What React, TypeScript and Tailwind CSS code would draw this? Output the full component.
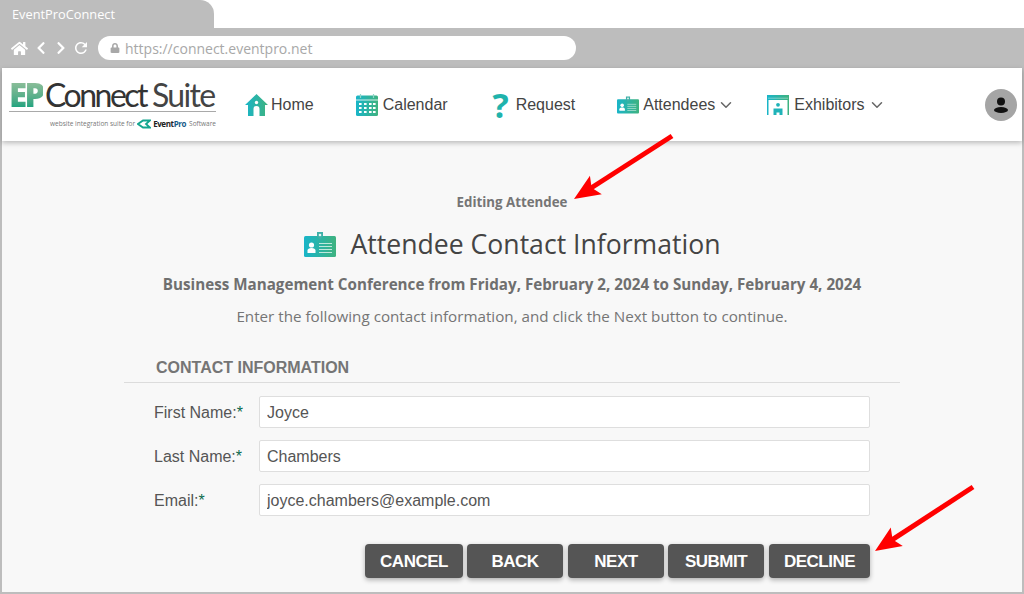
import React from "react";
import { FaHome, FaChevronLeft, FaChevronRight, FaLock } from "react-icons/fa";
import { MdRefresh } from "react-icons/md";
import { LuChevronDown } from "react-icons/lu";

const Grad = ({ id }: { id: string }) => (
  <defs>
    <linearGradient id={id} x1="0" y1="0" x2="1" y2="0">
      <stop offset="0" stopColor="#19b5c9" />
      <stop offset="1" stopColor="#3fb27f" />
    </linearGradient>
  </defs>
);

const HomeIcon = () => (
  <svg width="23" height="22" viewBox="0 0 23 22">
    <Grad id="g-home" />
    <path fill="url(#g-home)" fillRule="evenodd" d="M11.5 0 23 11h-3v11h-5.5v-7a3 3 0 0 0-6 0v7H3V11H0Z" />
    <circle cx="11.5" cy="8.5" r="1.7" fill="#fff" />
  </svg>
);

const CalendarIcon = () => (
  <svg width="22" height="22" viewBox="0 0 22 22">
    <Grad id="g-cal" />
    <rect x="0" y="1.5" width="22" height="20.5" rx="1.5" fill="url(#g-cal)" />
    <path d="M4.500 0v4M17.500 0v4" stroke="#8fd6c8" strokeWidth="1.2" />
    <path d="M0 6h22" stroke="#fff" strokeWidth="0.8" />
    {[9, 13, 17].map((y) =>
      [3, 8, 13, 17].map((x) => <rect key={`${x}-${y}`} x={x} y={y} width="2.600" height="2" fill="#fff" />)
    )}
  </svg>
);

const BadgeIcon = ({ id, w, h }: { id: string; w: number; h: number }) => (
  <svg width={w} height={h} viewBox="0 0 32 25">
    <Grad id={id} />
    <rect x="0" y="4" width="32" height="21" rx="1.500" fill={`url(#${id})`} />
    <path d="M13 0h6v4l-3 4-3-4Z" fill="#3fb0a8" />
    <circle cx="16" cy="3" r="1.300" fill="#e8f6f4" />
    <circle cx="7.500" cy="13" r="2.600" fill="#fff" />
    <path d="M3.500 21v-2.500c0-1.600 1.500-2.500 4-2.500s4 .9 4 2.500V21Z" fill="#fff" />
    <path d="M15 11.500h13M15 14.500h13M15 17.500h13M15 20.500h13" stroke="#bfe8dc" strokeWidth="1" />
  </svg>
);

const ExhibitorIcon = () => (
  <svg width="22" height="20" viewBox="0 0 22 20">
    <Grad id="g-exh" />
    <path d="M0 0h22v20h-1.500V5h-19v15H0Z" fill="url(#g-exh)" />
    <path d="M1.500 3.200h19" stroke="#fff" strokeWidth="0.8" strokeDasharray="1 1" />
    <circle cx="11" cy="9.800" r="1.900" fill="#1fb3b8" />
    <path d="M6.500 20v-6.500h9V20Z" fill="#1fb3b8" />
    <path d="M9.500 20v-2.500h3V20Z" fill="#fff" />
  </svg>
);

const navItems = [
  { label: "Home", icon: <HomeIcon />, gap: "gap-[3px]", margin: "ml-0" },
  { label: "Calendar", icon: <CalendarIcon />, gap: "gap-[5px]", margin: "ml-[42px]" },
  {
    label: "Request",
    icon: <span className="w-[20px] text-center text-[34px] leading-none font-bold text-[#1fb3ac] font-['Open_Sans',sans-serif]">?</span>,
    gap: "gap-[5px]",
    margin: "ml-[43px]",
  },
  { label: "Attendees", icon: <BadgeIcon id="g-att" w={22} h={18} />, gap: "gap-[4px]", margin: "ml-[42px]", caret: true },
  { label: "Exhibitors", icon: <ExhibitorIcon />, gap: "gap-[5px]", margin: "ml-[32px]", caret: true },
];

const fields = [
  { label: "First Name:", value: "Joyce" },
  { label: "Last Name:", value: "Chambers" },
  { label: "Email:", value: "joyce.chambers@example.com" },
];

const buttons = [
  { label: "CANCEL", width: "w-[98px]" },
  { label: "BACK", width: "w-[96px]" },
  { label: "NEXT", width: "w-[96px] ml-[1px]" },
  { label: "SUBMIT", width: "w-[96px]" },
  { label: "DECLINE", width: "w-[101px] ml-[1px]" },
];

const RedArrow = ({ x1, y1, x2, y2 }: { x1: number; y1: number; x2: number; y2: number }) => {
  const a = Math.atan2(y2 - y1, x2 - x1);
  const px = (d: number, o: number) => `${x2 - Math.cos(a) * d - Math.sin(a) * o},${y2 - Math.sin(a) * d + Math.cos(a) * o}`;
  return (
    <g>
      <line x1={x1} y1={y1} x2={x2 - Math.cos(a) * 18} y2={y2 - Math.sin(a) * 18} stroke="#ff0000" strokeWidth="5" />
      <polygon points={`${x2},${y2} ${px(26, 11)} ${px(21, 0)} ${px(26, -11)}`} fill="#ff0000" />
    </g>
  );
};

export default function App() {
  return (
    <div className="relative w-[1024px] h-[594px] overflow-hidden bg-white font-['Liberation_Sans',sans-serif]">
      <div className="h-[28px] bg-white">
        <div className="w-[214px] h-[28px] bg-[#bdbdbd] rounded-tr-[14px] pl-[12px] text-[12.800px] leading-[29px] text-white font-['Open_Sans',sans-serif]">
          EventProConnect
        </div>
      </div>

      <div className="h-[40px] bg-[#bdbdbd] flex items-center pl-[11px] text-white">
        <FaHome size={17} />
        <FaChevronLeft size={14} className="ml-[6px]" />
        <FaChevronRight size={14} className="ml-[6px]" />
        <MdRefresh size={18} className="ml-[4px]" />
        <div className="ml-[8px] w-[478px] h-[24px] bg-white rounded-full flex items-center pl-[12px] text-[#a8a8a8]">
          <FaLock size={10} />
          <span className="ml-[5px] text-[14px] font-['Open_Sans',sans-serif]">https://connect.eventpro.net</span>
        </div>
      </div>

      <div className="h-[526px] flex flex-col border-x-2 border-b-2 border-[#bdbdbd] bg-[#f8f8f8]">
        <header className="h-[73px] shrink-0 bg-white shadow-[0_2px_5px_rgba(0,0,0,0.25)] flex items-center">
          <div className="w-[243px] shrink-0 pl-[7px] pb-[2px]">
            <div className="flex items-baseline w-[207px] h-[34px] pt-[3px] border-b border-[#a9a9a9] leading-[27px] whitespace-nowrap">
              <span className="text-[33px] font-extrabold tracking-[-2.500px] bg-gradient-to-b from-[#8fbf9a] to-[#14a37f] bg-clip-text text-transparent font-['Open_Sans',sans-serif]">EP</span>
              <span className="ml-[2px] text-[32px] tracking-[-2.500px] text-[#333] font-['Lato',sans-serif]">Connect</span>
              <span className="ml-[6px] text-[32px] tracking-[-1.700px] text-[#444] font-['Lato',sans-serif]">Suite</span>
            </div>
            <div className="flex items-center justify-end w-[207px] mt-[6px] text-[6.500px] text-[#777] font-['Open_Sans',sans-serif] whitespace-nowrap">
              <span>website integration suite for</span>
              <svg width="14" height="10" viewBox="0 0 14 10" className="mx-[2px]">
                <path d="M13 1.500H6L1 5l5 3.500h7L9 5Z" fill="none" stroke="#13a58e" strokeWidth="1.800" />
              </svg>
              <span className="text-[8px] font-bold tracking-[-0.4px] text-[#222]">Event<span className="text-[#155a88]">Pro</span></span>
              <span className="ml-[3px]">Software</span>
            </div>
          </div>

          <nav className="flex items-center text-[16px] text-[#444]">
            {navItems.map((item) => (
              <div key={item.label} className={`flex items-center ${item.gap} ${item.margin}`}>
                {item.icon}
                <span>{item.label}</span>
                {item.caret && <LuChevronDown size={18} className="-ml-[2px] text-[#666]" />}
              </div>
            ))}
          </nav>

          <div className="ml-auto mr-[5px] w-[32px] h-[32px] rounded-full bg-[#a5a5a5] flex items-center justify-center">
            <svg width="16" height="16" viewBox="0 0 16 16">
              <circle cx="8" cy="4.500" r="4" fill="#111" />
              <ellipse cx="8" cy="13" rx="7" ry="3" fill="#111" />
            </svg>
          </div>
        </header>

        <main className="flex-1 flex flex-col items-center text-center font-['Open_Sans',sans-serif]">
          <p className="mt-[52px] text-[13.300px] leading-[18px] font-bold text-[#757575]">Editing Attendee</p>
          <div className="mt-[15px] flex items-center">
            <BadgeIcon id="g-title" w={32} h={25} />
            <h1 className="ml-[15px] text-[26.600px] leading-[36px] text-[#444]">Attendee Contact Information</h1>
          </div>
          <p className="mt-[12px] text-[15.200px] leading-[20px] font-bold text-[#6f6f6f]">
            Business Management Conference from Friday, February 2, 2024 to Sunday, February 4, 2024
          </p>
          <p className="mt-[12px] text-[15.200px] leading-[20px] text-[#757575]">
            Enter the following contact information, and click the Next button to continue.
          </p>

          <section className="mt-[31px] w-[776px] text-left font-['Liberation_Sans',sans-serif]">
            <h2 className="pl-[32px] h-[26px] text-[16px] leading-[22px] font-bold text-[#757575] border-b border-[#dcdcdc]">
              CONTACT INFORMATION
            </h2>
            <div className="mt-[13px] flex flex-col gap-[12px]">
              {fields.map((f) => (
                <label key={f.label} className="flex items-center">
                  <span className="pl-[30px] pt-[1px] w-[135px] text-[16px] text-[#555]">
                    {f.label}
                    <span className="text-[#0a6b4f]">*</span>
                  </span>
                  <input
                    readOnly
                    value={f.value}
                    className="w-[611px] h-[32px] px-[7px] pt-[1px] bg-white border border-[#dedede] rounded-[2px] text-[16px] text-[#555]"
                  />
                </label>
              ))}
            </div>
            <div className="mt-[28px] flex justify-end gap-[4px] pr-[30px]">
              {buttons.map((b) => (
                <button
                  key={b.label}
                  className={`${b.width} h-[34px] pt-[2px] bg-[#555] rounded-[4px] text-[17px] tracking-[-0.500px] font-bold text-white shadow-[0_2px_5px_rgba(0,0,0,0.3)]`}
                >
                  {b.label}
                </button>
              ))}
            </div>
          </section>
        </main>
      </div>

      <svg className="absolute inset-0 pointer-events-none" width="1024" height="594">
        <RedArrow x1={672} y1={136} x2={574} y2={199} />
        <RedArrow x1={973} y1={487} x2={875} y2={551} />
      </svg>
    </div>
  );
}
